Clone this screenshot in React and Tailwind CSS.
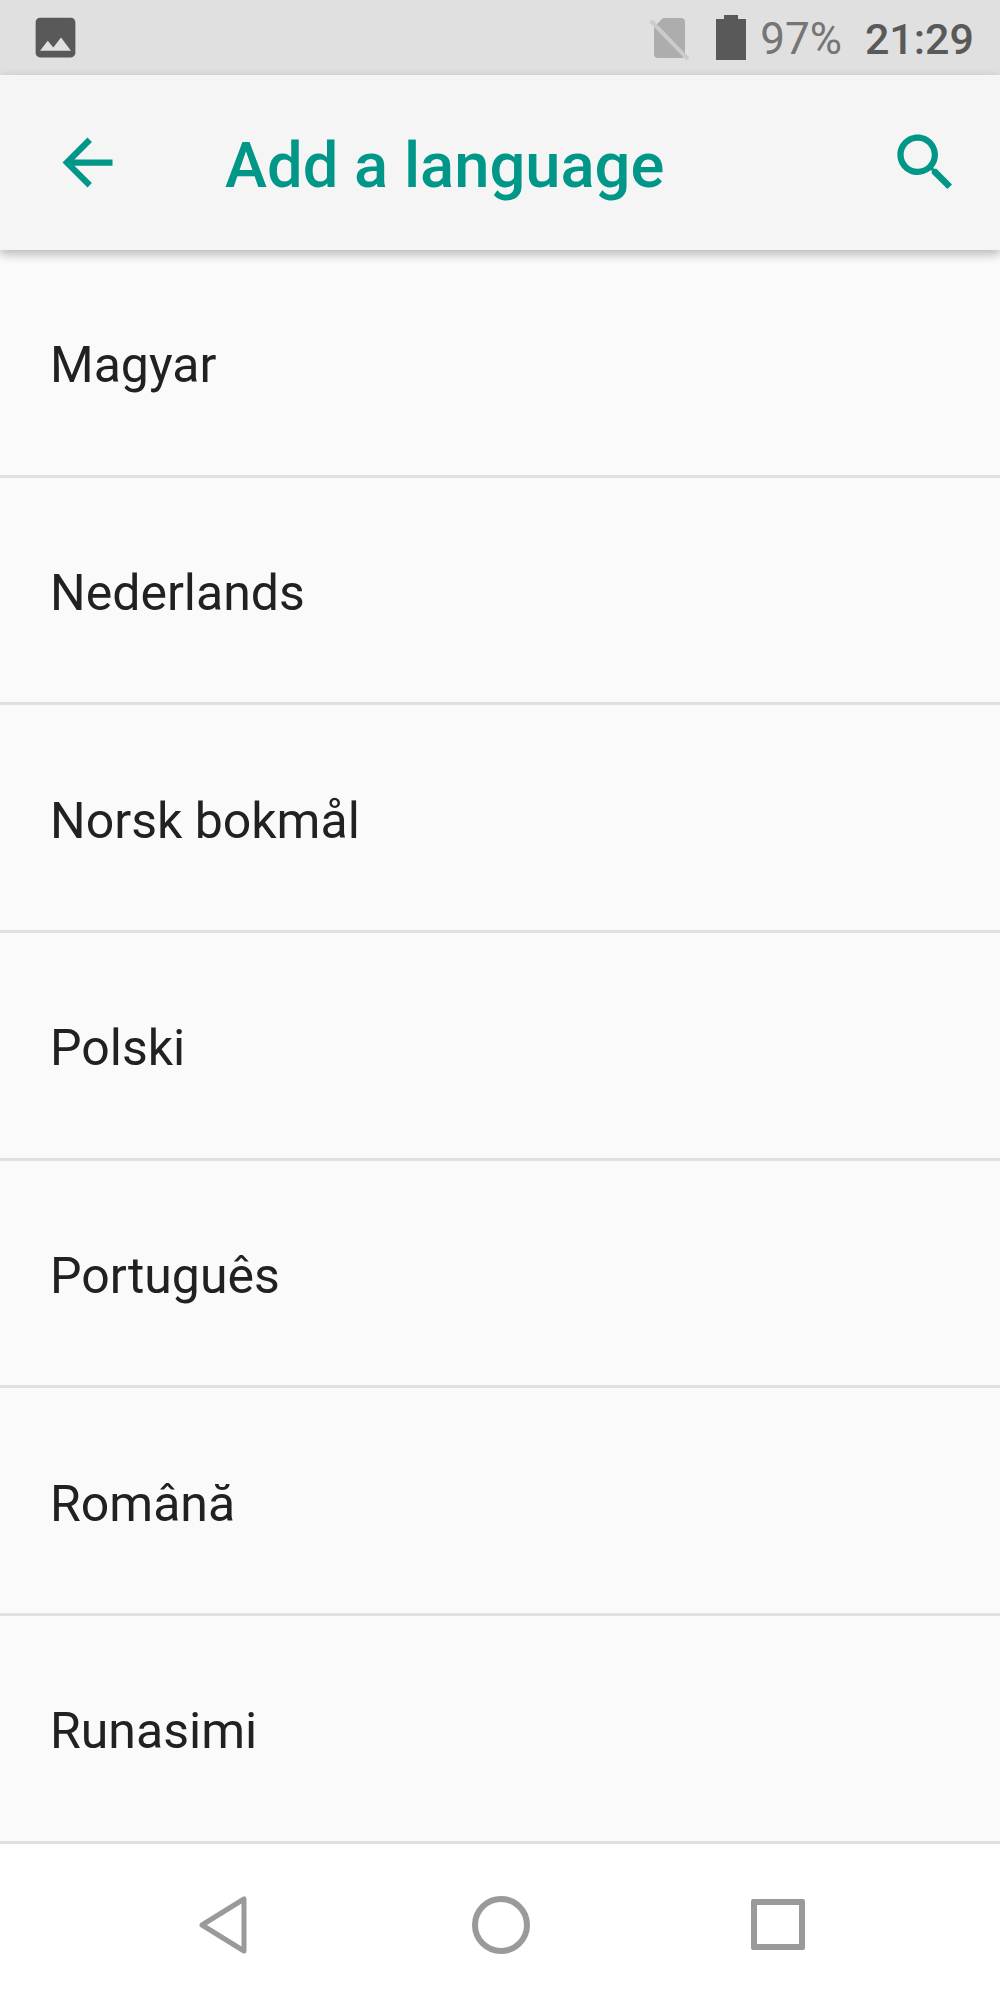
const languages = ["Magyar", "Nederlands", "Norsk bokmål", "Polski", "Português", "Română", "Runasimi"];

function StatusBar() {
    return (
        <div className="h-[75px] shrink-0 bg-[#e0e0e0] flex items-center pl-[29px] pr-[26px]">
            <svg width="53" height="53" viewBox="0 0 24 24" fill="#595959" className="-mt-[1px]">
                <path d="M21 19V5c0-1.1-.9-2-2-2H5c-1.1 0-2 .9-2 2v14c0 1.1.9 2 2 2h14c1.1 0 2-.9 2-2zM8.5 13.5l2.5 3.01L14.5 12l4.5 6H5l3.5-4.5z" />
            </svg>
            <div className="ml-auto flex items-center">
                {/* no sim */}
                <svg width="44" height="46" viewBox="0 0 44 46" className="mr-[26px]">
                    <path d="M18 3H36C38.5 3 40 4.5 40 7V39C40 41.5 38.5 43 36 43H13C10.5 43 9 41.5 9 39V12Z" fill="#adadad" />
                    <path d="M6 6L43 44" stroke="#cbcbcb" strokeWidth="4" />
                </svg>
                {/* battery */}
                <svg width="30" height="45" viewBox="0 0 30 45" className="mr-[14px] ml-px">
                    <path d="M8 0H22V4H30V45H0V4H8Z" fill="#595959" />
                </svg>
                <span className="font-['Roboto',sans-serif] text-[44px] leading-none text-[#757575] mr-[23px] mt-[3px]">97%</span>
                <span className="font-['Roboto',sans-serif] font-medium text-[43px] leading-none text-[#595959] mt-[3px]">21:29</span>
            </div>
        </div>
    );
}

function Header() {
    return (
        <div className="relative z-10 h-[175px] shrink-0 bg-[#f5f5f5] shadow-[0_4px_10px_rgba(0,0,0,0.28)] flex items-center">
            <svg width="75" height="75" viewBox="0 0 24 24" fill="#009688" className="ml-[50px]">
                <path d="M20 11H7.83l5.59-5.59L12 4l-8 8 8 8 1.41-1.41L7.83 13H20v-2z" />
            </svg>
            <h1 className="ml-[100px] mt-[6px] font-['Roboto',sans-serif] font-medium text-[63.3px] leading-none text-[#009688]">Add a language</h1>
            <svg width="75" height="75" viewBox="0 0 24 24" fill="#009688" className="ml-auto mr-[37px]">
                <path d="M15.5 14h-.79l-.28-.27C15.41 12.59 16 11.11 16 9.5 16 5.91 13.09 3 9.5 3S3 5.91 3 9.5 5.91 16 9.5 16c1.61 0 3.09-.59 4.23-1.57l.27.28v.79l5 4.99L20.49 19l-4.99-5zm-6 0C7.01 14 5 11.99 5 9.5S7.01 5 9.5 5 14 7.01 14 9.5 11.99 14 9.5 14z" />
            </svg>
        </div>
    );
}

function NavBar() {
    return (
        <div className="flex-1 bg-white flex items-center pt-[6px]">
            <svg width="50" height="60" viewBox="0 0 50 60" className="ml-[198px]">
                <path d="M46 4V56L4 30Z" fill="none" stroke="#9a9a9a" strokeWidth="5" strokeLinejoin="round" />
            </svg>
            <div className="ml-[224px] w-[58px] h-[58px] rounded-full border-[6px] border-[#9a9a9a]"></div>
            <div className="ml-[221px] w-[54px] h-[51px] rounded-[2px] border-[6px] border-[#9a9a9a]"></div>
        </div>
    );
}

export default function App() {
    return (
        <div className="w-[1000px] h-[2000px] flex flex-col bg-[#fafafa] overflow-hidden">
            <StatusBar />
            <Header />
            <div className="shrink-0">
                {languages.map((lang) => (
                    <div key={lang} className="h-[227.7px] pt-[6px] border-b-[3px] border-[#e0e0e0] flex items-center pl-[50px] font-['Roboto',sans-serif] text-[50px] leading-none text-[#212121]">
                        {lang}
                    </div>
                ))}
            </div>
            <NavBar />
        </div>
    );
}
